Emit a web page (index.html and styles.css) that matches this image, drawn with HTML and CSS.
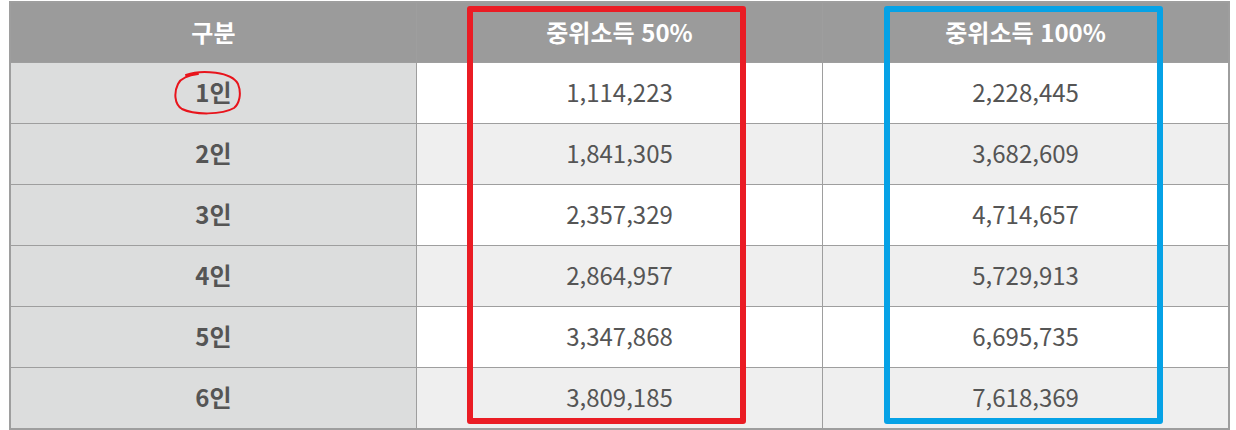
FILE: index.html
```html
<!DOCTYPE html>
<html lang="ko">
<head>
<meta charset="utf-8">
<link rel="stylesheet" href="styles.css">
</head>
<body>
<div class="wrap">
  <table class="income">
    <thead>
      <tr><th>구분</th><th>중위소득 50%</th><th>중위소득 100%</th></tr>
    </thead>
    <tbody>
      <tr><td class="lbl">1인</td><td>1,114,223</td><td>2,228,445</td></tr>
      <tr><td class="lbl">2인</td><td>1,841,305</td><td>3,682,609</td></tr>
      <tr><td class="lbl">3인</td><td>2,357,329</td><td>4,714,657</td></tr>
      <tr><td class="lbl">4인</td><td>2,864,957</td><td>5,729,913</td></tr>
      <tr><td class="lbl">5인</td><td>3,347,868</td><td>6,695,735</td></tr>
      <tr><td class="lbl">6인</td><td>3,809,185</td><td>7,618,369</td></tr>
    </tbody>
  </table>
  <div class="box box-red"></div>
  <div class="box box-blue"></div>
  <svg class="circle" width="72" height="48" viewBox="0 0 72 48">
    <path d="M14 5 C 30 -1, 60 2, 66 14 C 70 24, 67 34, 62 38 C 50 45, 22 45, 10 39 C 2 34, 2 22, 6 14 C 9 8, 16 5, 26 4" fill="none" stroke="#e8141c" stroke-width="2" stroke-linecap="round"/>
  </svg>
</div>
</body>
</html>
```
FILE: styles.css
```css
html, body {
  margin: 0;
  padding: 0;
  background: #ffffff;
}
body {
  font-family: "Noto Sans CJK KR", "Noto Sans", sans-serif;
}
.wrap {
  position: relative;
  width: 1236px;
  height: 430px;
}
.income {
  margin: 1px 0 0 9px;
  width: 1221px;
  border-collapse: collapse;
  table-layout: fixed;
  border: 2px solid #9e9e9e;
}
.income th, .income td {
  border: 1px solid #9e9e9e;
  text-align: center;
  padding: 0 0 3px;
  font-size: 24px;
  height: 57px;
}
.income th {
  background: #9b9b9b;
  color: #ffffff;
  font-weight: 700;
  height: 56px;
}
.income td {
  color: #555555;
  background: #ffffff;
}
.income tbody tr:nth-child(even) td {
  background: #efefef;
}
.income td.lbl,
.income tbody tr:nth-child(even) td.lbl {
  background: #dcdddd;
  font-weight: 700;
}
.box {
  position: absolute;
  top: 5px;
  height: 418px;
  border-radius: 3px;
  box-sizing: border-box;
  border: 6px solid;
}
.box-red {
  left: 467px;
  width: 279px;
  border-color: #ea1c24;
}
.box-blue {
  left: 884px;
  width: 279px;
  border-color: #06a2e6;
}
.circle {
  position: absolute;
  left: 172px;
  top: 69px;
}
```
